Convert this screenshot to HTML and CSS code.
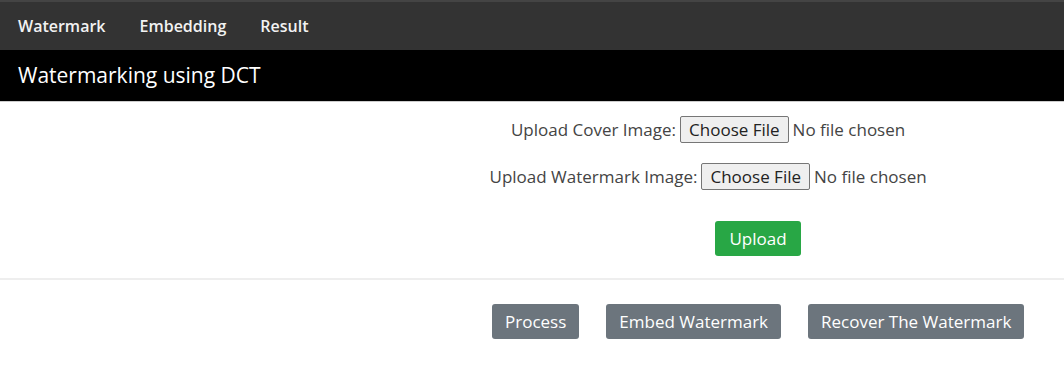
FILE: index.html
```html
<!DOCTYPE html>
<html lang="en">
<head>
    <meta charset="UTF-8">
    <meta name="viewport" content="width=device-width, initial-scale=1.0">
    <title>Watermarking using DCT</title>
    <link rel="stylesheet" href="styles.css">
</head>
<body>
    <nav class="topbar">
        <a href="#">Watermark</a>
        <a href="#">Embedding</a>
        <a href="#">Result</a>
    </nav>

    <header class="page-title">Watermarking using DCT</header>

    <form class="upload-form">
        <div class="field">
            <label for="cover">Upload Cover Image:</label>
            <input type="file" id="cover">
        </div>
        <div class="field">
            <label for="mark">Upload Watermark Image:</label>
            <input type="file" id="mark">
        </div>
        <div class="upload-row">
            <button type="button" class="btn btn-green">Upload</button>
        </div>
    </form>

    <hr class="divider">

    <div class="actions">
        <button class="btn btn-gray">Process</button>
        <button class="btn btn-gray">Embed Watermark</button>
        <button class="btn btn-gray">Recover The Watermark</button>
    </div>
</body>
</html>
```

FILE: styles.css
```css
body {
    margin: 0;
    font-family: "Open Sans", "Noto Sans", Arial, sans-serif;
    color: #333;
    background: #fff;
}

.topbar {
    display: flex;
    align-items: center;
    gap: 34px;
    height: 48px;
    padding: 0 18px;
    background-color: #333;
    border-top: 2px solid #444;
}

.topbar a {
    color: #f2f2f2;
    text-decoration: none;
    font-size: 16px;
    font-weight: 600;
}

.page-title {
    height: 52px;
    line-height: 50px;
    padding-left: 18px;
    background-color: #000;
    color: #fff;
    font-size: 21px;
    border-bottom: 1px solid #ccc;
    box-sizing: border-box;
}

.upload-form {
    padding: 14px 0 0 367px;
    text-align: center;
    font-size: 17px;
    color: #444;
}

.field {
    height: 26px;
    margin-bottom: 21px;
    display: flex;
    justify-content: center;
    align-items: center;
    gap: 4px;
}

.field input {
    font-family: inherit;
    font-size: 17px;
    width: 240px;
}

.field input::file-selector-button {
    font-family: inherit;
    font-size: 17px;
    height: 27px;
    padding: 0 8px;
    margin-right: 4px;
    background: #efefef;
    border: 1px solid #767676;
    border-radius: 2px;
    color: #222;
}

.upload-row {
    padding: 11px 0 0 85px;
}

.btn {
    font-family: inherit;
    font-size: 17px;
    color: #fff;
    border: none;
    border-radius: 3px;
    height: 35px;
    padding: 0 13px;
    cursor: pointer;
}

.btn-green {
    background-color: #28a745;
    width: 86px;
}

.btn-gray {
    background-color: #6c757d;
}

.divider {
    margin: 22px 0 0;
    border: none;
    border-top: 2px solid #eee;
}

.actions {
    display: flex;
    gap: 27px;
    padding: 24px 0 0 492px;
}
```
